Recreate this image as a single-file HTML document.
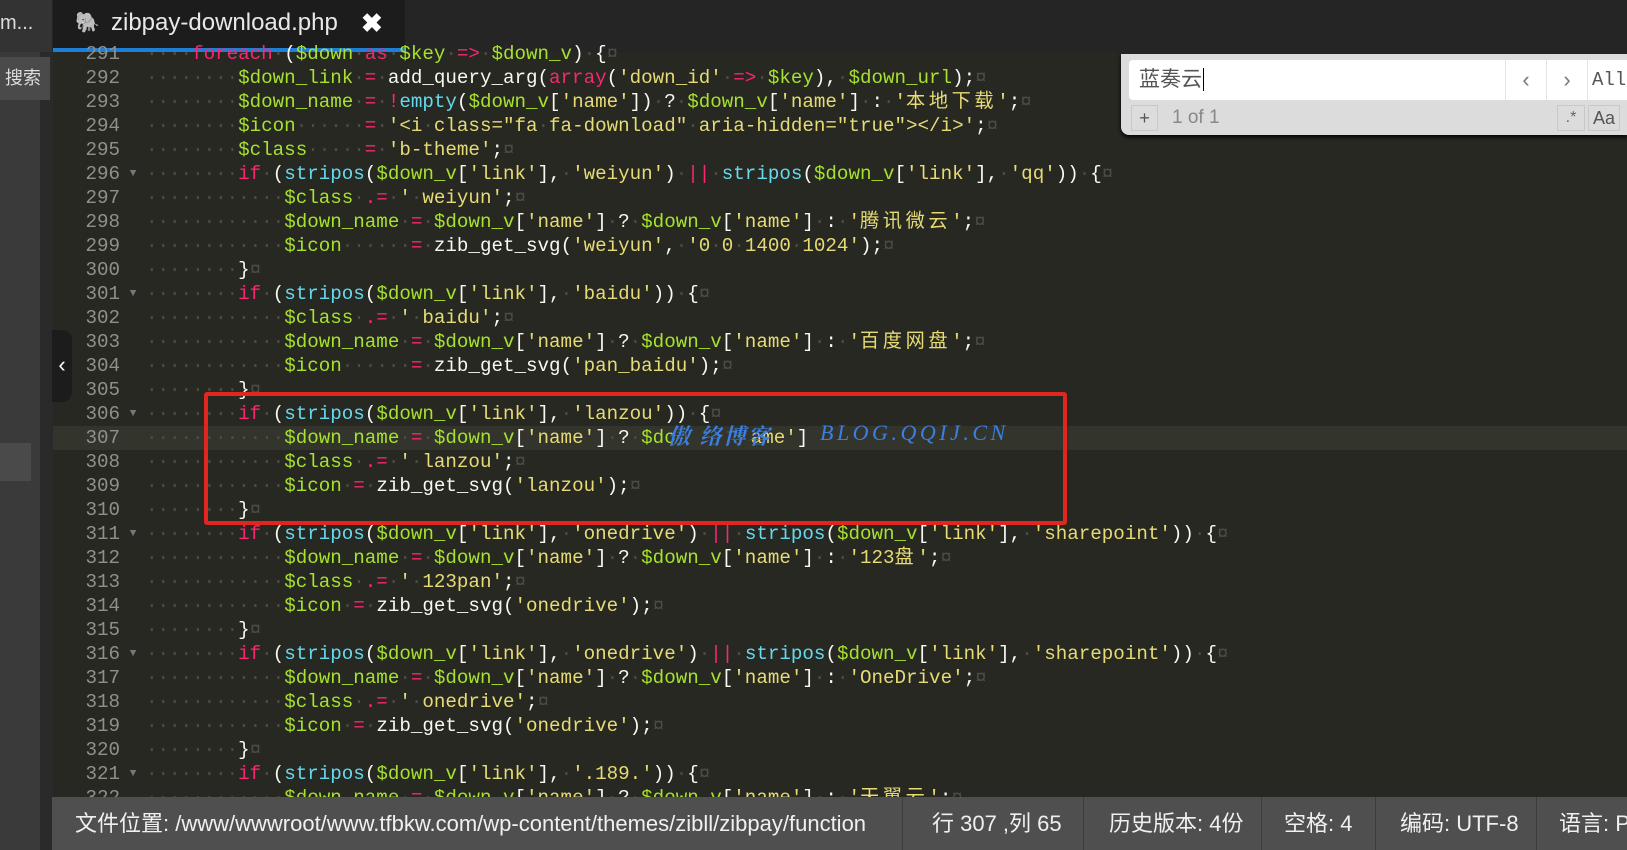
<!DOCTYPE html>
<html><head><meta charset="utf-8"><style>
*{margin:0;padding:0;box-sizing:border-box}
body{width:1627px;height:850px;overflow:hidden;background:#272822;position:relative;font-family:"Liberation Sans","Noto Sans CJK SC",sans-serif}
#top{position:absolute;left:0;top:0;width:1627px;height:52px;background:#252525}
#lefttab{position:absolute;left:0;top:0;width:52px;height:52px;background:#333;color:#ddd;font-size:20px;line-height:46px;padding-left:0}
#tab{position:absolute;left:53px;top:0;width:352px;height:52px;background:#1c1c1c;border-bottom:4px solid #1e7fd6;color:#e8e8e8;font-size:24px;line-height:46px;padding-left:58px}
#tab .x{position:absolute;left:308px;top:0;font-size:26px;color:#fff;font-weight:bold}
#side{position:absolute;left:0;top:52px;width:40px;height:798px;background:#3a3a3a}
#side2{position:absolute;left:40px;top:52px;width:13px;height:798px;background:#2a2a2a}
#search{position:absolute;left:0;top:57px;width:50px;height:43px;background:#4a4a4a;color:#ddd;font-size:18px;line-height:43px;padding-left:5px}
#sel{position:absolute;left:0;top:443px;width:31px;height:38px;background:#4a4a4a}
#coll{position:absolute;left:52px;top:330px;width:20px;height:72px;background:#1c1c1c;border-radius:0 10px 10px 0;color:#fff;font-size:22px;line-height:70px;text-align:center}
#code{position:absolute;left:53px;top:42px;width:1574px;height:755px;overflow:hidden}
.ln{height:24px;line-height:24px;font-family:"Liberation Mono","Noto Sans CJK SC",monospace;font-size:19.2px;white-space:pre;position:relative}
.ln .n{display:inline-block;width:67px;text-align:right;color:#8f908a}
.ln .a{display:inline-block;width:26px;color:#777;font-size:11px;text-align:center;vertical-align:top}
.cur{background:#33342c}
.v{color:#a6e22e}.s{color:#e6db74}.k{color:#f92672}.f{color:#66d9ef}.p{color:#f8f8f2}.d{color:#4c4d45}.e{color:#4c4d45}
.cj{letter-spacing:3.6px}
#box{position:absolute;left:204px;top:392px;width:863px;height:133px;border:4px solid #e0261e;border-radius:3px}
.wm{position:absolute;top:420px;font-family:"Liberation Serif","Noto Serif CJK SC",serif;font-style:italic;color:#3b7fe0;font-size:22px;font-weight:bold;white-space:nowrap}
#find{position:absolute;left:1121px;top:54px;width:506px;height:81px;background:#dcdcdc;border-radius:0 0 0 8px;box-shadow:0 2px 4px #000}
#inp{position:absolute;left:8px;top:6px;width:376px;height:40px;background:#fff;border-radius:4px 0 0 4px;font-size:21px;color:#555;line-height:40px;padding-left:10px}
.fb{position:absolute;top:6px;height:40px;background:#fff;border-left:1px solid #e4e4e4;color:#777;font-size:22px;line-height:40px;text-align:center}
#st{position:absolute;left:52px;top:797px;width:1575px;height:53px;background:#4f4f4f;color:#f0f0f0;font-size:22px;line-height:53px;overflow:hidden;white-space:nowrap}
#st span{position:absolute;top:0}
#st i{position:absolute;top:0;width:1px;height:53px;background:#3d3d3d}
</style></head><body>
<div id="top"></div>
<div id="lefttab">m...</div>
<div id="tab"><span style="position:absolute;left:22px;top:0;color:#5a9ccc;font-size:20px">🐘</span>zibpay-download.php<span class="x">✖</span></div>
<div id="code"></div>
<div id="side"></div><div id="side2"></div>
<div id="search">搜索</div>
<div id="sel"></div>
<div id="coll">‹</div>
<div id="box"></div>
<div class="wm" style="left:668px;letter-spacing:2px">傲 络博客</div>
<div class="wm" style="left:820px;letter-spacing:3.5px;font-weight:normal">BLOG.QQIJ.CN</div>
<div id="find">
 <div id="inp">蓝奏云<span style="border-left:1px solid #000;margin-left:1px"></span></div>
 <div class="fb" style="left:384px;width:41px">&#8249;</div>
 <div class="fb" style="left:425px;width:41px">&#8250;</div>
 <div class="fb" style="left:466px;width:40px;font-family:'Liberation Mono',monospace;font-size:19px;text-align:left;padding-left:4px;color:#555">All</div>
 <div style="position:absolute;left:10px;top:51px;width:27px;height:26px;border:1px solid #c8c8c8;text-align:center;line-height:24px;color:#555;font-size:18px">+</div>
 <div style="position:absolute;left:51px;top:51px;font-size:19px;color:#888;line-height:26px">1 of 1</div>
 <div style="position:absolute;left:436px;top:51px;width:28px;height:26px;border:1px solid #c8c8c8;text-align:center;line-height:24px;color:#666;font-size:16px">.*</div>
 <div style="position:absolute;left:467px;top:51px;width:32px;height:26px;border:1px solid #c8c8c8;text-align:center;line-height:24px;color:#555;font-size:18px">Aa</div>
</div>
<div id="st">
 <span style="left:23px">文件位置: /www/wwwroot/www.tfbkw.com/wp-content/themes/zibll/zibpay/function</span>
 <i style="left:850px"></i><span style="left:880px">行 307 ,列 65</span>
 <i style="left:1031px"></i><span style="left:1057px">历史版本: 4份</span>
 <i style="left:1209px"></i><span style="left:1232px">空格: 4</span>
 <i style="left:1323px"></i><span style="left:1348px">编码: UTF-8</span>
 <i style="left:1484px"></i><span style="left:1507px">语言: P</span>
</div>
<script>
var L=[
[291,"    foreach ($down as $key => $down_v) {"],
[292,"        $down_link = add_query_arg(array('down_id' => $key), $down_url);"],
[293,"        $down_name = !empty($down_v['name']) ? $down_v['name'] : '本地下载';"],
[294,"        $icon      = '<i class=\"fa fa-download\" aria-hidden=\"true\"></i>';"],
[295,"        $class     = 'b-theme';"],
[296,"        if (stripos($down_v['link'], 'weiyun') || stripos($down_v['link'], 'qq')) {",1],
[297,"            $class .= ' weiyun';"],
[298,"            $down_name = $down_v['name'] ? $down_v['name'] : '腾讯微云';"],
[299,"            $icon      = zib_get_svg('weiyun', '0 0 1400 1024');"],
[300,"        }"],
[301,"        if (stripos($down_v['link'], 'baidu')) {",1],
[302,"            $class .= ' baidu';"],
[303,"            $down_name = $down_v['name'] ? $down_v['name'] : '百度网盘';"],
[304,"            $icon      = zib_get_svg('pan_baidu');"],
[305,"        }"],
[306,"        if (stripos($down_v['link'], 'lanzou')) {",1],
[307,"            $down_name = $down_v['name'] ? $do      ame']",0,1],
[308,"            $class .= ' lanzou';"],
[309,"            $icon = zib_get_svg('lanzou');"],
[310,"        }"],
[311,"        if (stripos($down_v['link'], 'onedrive') || stripos($down_v['link'], 'sharepoint')) {",1],
[312,"            $down_name = $down_v['name'] ? $down_v['name'] : '123盘';"],
[313,"            $class .= ' 123pan';"],
[314,"            $icon = zib_get_svg('onedrive');"],
[315,"        }"],
[316,"        if (stripos($down_v['link'], 'onedrive') || stripos($down_v['link'], 'sharepoint')) {",1],
[317,"            $down_name = $down_v['name'] ? $down_v['name'] : 'OneDrive';"],
[318,"            $class .= ' onedrive';"],
[319,"            $icon = zib_get_svg('onedrive');"],
[320,"        }"],
[321,"        if (stripos($down_v['link'], '.189.')) {",1],
[322,"            $down_name = $down_v['name'] ? $down_v['name'] : '天翼云';"]
];
function esc(t){return t.replace(/&/g,"&amp;").replace(/</g,"&lt;").replace(/>/g,"&gt;");}
function str(t){
 var o="";
 for(var i=0;i<t.length;i++){var c=t[i];
  if(c==" ")o+='<span class="d">·</span>';
  else if(/[\u4e00-\u9fff]/.test(c))o+='<span class="cj">'+c+'</span>';
  else o+=esc(c);}
 return o;
}
function hl(s,raw){
 if(raw){
  return '<span class="d">············</span><span class="v">$down_name</span><span class="d">·</span><span class="k">=</span><span class="d">·</span><span class="v">$down_v</span><span class="p">[</span><span class="s">\'name\'</span><span class="p">]</span><span class="d">·</span><span class="p">?</span><span class="d">·</span><span class="v">$do</span><span style="display:inline-block;width:75px"></span><span class="s">ame\'</span><span class="p">]</span>';
 }
 var re=/('[^']*')|(\$\w+)|(\b(?:foreach|as|if|array)\b)|(\b(?:empty|stripos)\b)|(=>|\.=|\|\||!|=)|( )|(\w+|.)/g,m,o="";
 while((m=re.exec(s))){
  if(m[1])o+='<span class="s">'+str(m[1])+'</span>';
  else if(m[2])o+='<span class="v">'+m[2]+'</span>';
  else if(m[3])o+='<span class="k">'+m[3]+'</span>';
  else if(m[4])o+='<span class="f">'+m[4]+'</span>';
  else if(m[5])o+='<span class="k">'+esc(m[5])+'</span>';
  else if(m[6])o+='<span class="d">·</span>';
  else o+='<span class="p">'+esc(m[7])+'</span>';
 }
 return o+'<span class="e">¤</span>';
}
var h="";
L.forEach(function(l){h+='<div class="ln'+(l[0]==307?' cur':'')+'"><span class="n">'+l[0]+'</span><span class="a">'+(l[2]?'▼':'')+'</span>'+hl(l[1],l[3])+'</div>';});
document.getElementById('code').innerHTML=h;
</script>
</body></html>
